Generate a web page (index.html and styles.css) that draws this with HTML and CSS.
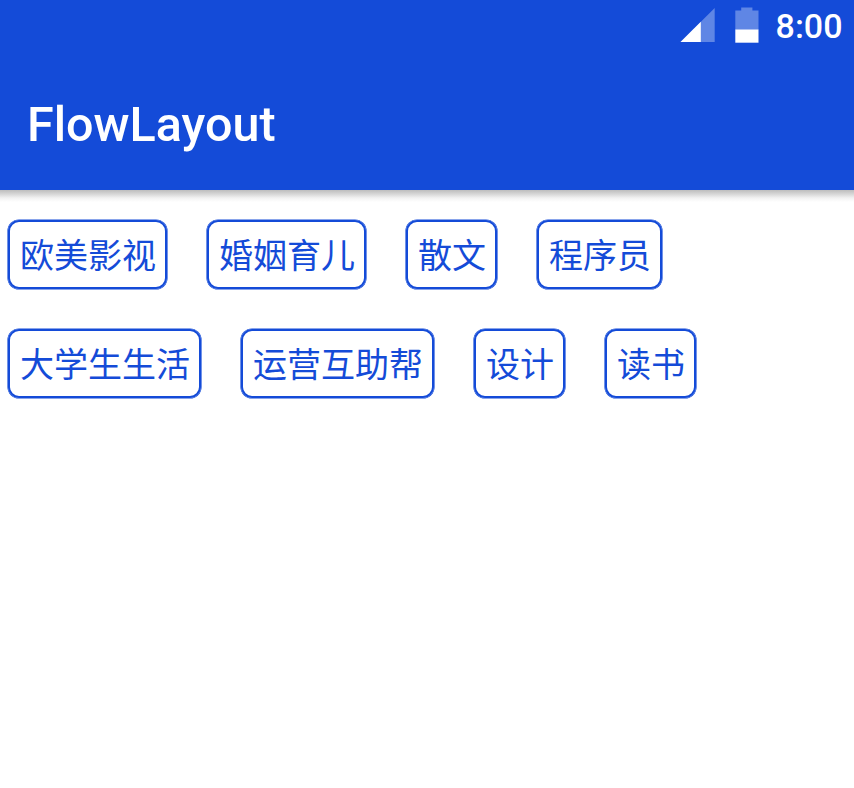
FILE: index.html
```html
<!DOCTYPE html>
<html lang="zh-CN">
<head>
<meta charset="utf-8">
<title>FlowLayout</title>
<link rel="stylesheet" href="styles.css">
</head>
<body>
<header class="header">
  <div class="status">
    <svg class="signal" width="35" height="35" viewBox="0 0 35 35"><path class="dim" d="M34.7 0V34H.5Z"/><path class="lit" d="M20.8 13.8V34H.5Z"/></svg>
    <svg class="battery" width="24" height="36" viewBox="0 0 24 36"><path class="dim" d="M6.2 .4H17.4V3.6H23.5V22.5H.3V3.6H6.2Z"/><path class="lit" d="M.3 22.4H23.5V35.7H.3Z"/></svg>
    <span class="time">8:00</span>
  </div>
  <h1 class="title">FlowLayout</h1>
</header>
<main class="flow">
  <span class="tag">欧美影视</span>
  <span class="tag">婚姻育儿</span>
  <span class="tag">散文</span>
  <span class="tag">程序员</span>
  <span class="tag">大学生生活</span>
  <span class="tag">运营互助帮</span>
  <span class="tag">设计</span>
  <span class="tag">读书</span>
</main>
</body>
</html>
```
FILE: styles.css
```css
* { box-sizing: border-box; }
body {
  margin: 0;
  height: 788px;
  overflow: hidden;
  background: #fff;
  font-family: Roboto, "Noto Sans CJK SC", sans-serif;
}
.header {
  height: 190px;
  background: #144bd8;
  color: #fff;
}
.status {
  display: flex;
  justify-content: flex-end;
  height: 58px;
  padding: 8px 11.5px 0 0;
}
.battery { margin: -1px 16.8px 0 19.7px; }
.dim { fill: #5f86e5; }
.lit { fill: #fff; }
.time {
  font-size: 34px;
  font-weight: 500;
  line-height: 37px;
}
.title {
  margin: 0;
  padding-left: 27px;
  font-size: 48.5px;
  font-weight: 500;
  line-height: 134px;
}
.flow {
  display: flex;
  flex-wrap: wrap;
  gap: 40px;
  padding: 30px 100px 0 8px;
  background: linear-gradient(#bdbdbd, #d6d6d6 4px, #f2f2f2 8px, #fff 12px) no-repeat 0 0 / 100% 12px;
}
.tag {
  height: 69px;
  padding: 0 9px 0 10px;
  border: 2px solid #144bd8;
  border-radius: 11px;
  box-shadow: 0 0 0 .6px #144bd8;
  color: #144bd8;
  font-size: 34px;
  line-height: 69px;
  white-space: nowrap;
}
```
